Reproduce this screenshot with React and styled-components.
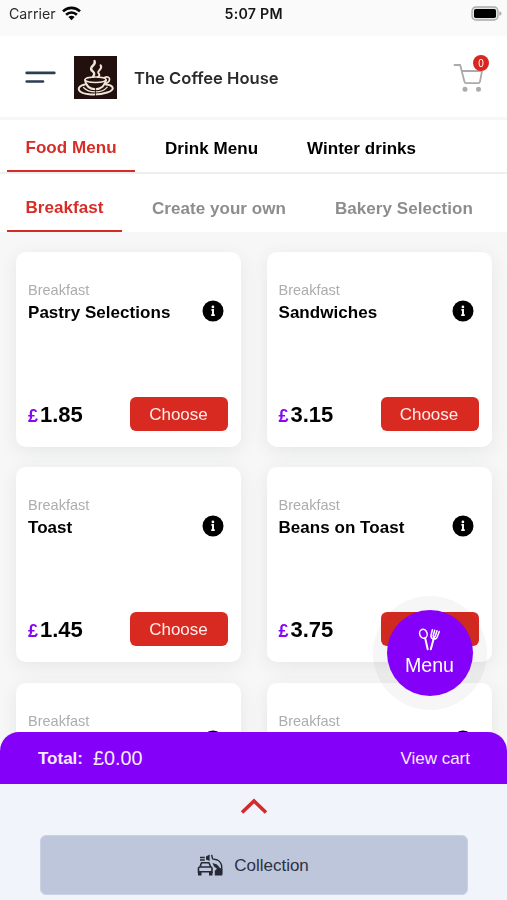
import React from "react";
import styled, { createGlobalStyle } from "styled-components";

const Global = createGlobalStyle`
  * { box-sizing: border-box; }
  body { margin: 0; background: #f7f7f7; }
  button { font: inherit; border: 0; padding: 0; margin: 0; }
`;

const Screen = styled.div`
  position: relative;
  display: flex;
  flex-direction: column;
  width: 507px;
  height: 900px;
  overflow: hidden;
  background: #f7f7f7;
  color: #000;
  font-family: "Liberation Sans", Arial, sans-serif;
  font-size: 17px;
  white-space: nowrap;
`;

const StatusBar = styled.div`
  display: grid;
  grid-template-columns: 215.5px auto 1fr;
  align-items: center;
  flex: none;
  height: 36px;
  padding: 0 4px 9px 9px;
  background: #fafafa;
  font-family: Inter, sans-serif;
  font-size: 14.2px;
`;

const Carrier = styled.div`
  display: flex;
  align-items: center;
  gap: 6px;
  color: #2b2b2b;
`;

const Clock = styled.div`
  font-weight: 600;
  letter-spacing: 0.25px;
  color: #161616;
`;

const Battery = styled.svg`
  justify-self: end;
  margin-right: 1px;
`;

const Header = styled.header`
  display: flex;
  align-items: center;
  flex: none;
  height: 84px;
  padding: 2px 18px 0 25px;
  background: #fff;
  border-bottom: 3px solid #f7f7f7;
`;

const Logo = styled.svg`
  margin-left: 18px;
`;

const Title = styled.h1`
  flex: 1;
  margin: 0 0 0 17px;
  font: 600 16.6px Inter, sans-serif;
  color: #2b2b2b;
`;

const CartButton = styled.div`
  position: relative;
  width: 36px;
  height: 46px;
`;

const CartIcon = styled.svg`
  display: block;
  margin-top: 7px;
`;

const Badge = styled.span`
  position: absolute;
  top: 0;
  right: 0;
  width: 16px;
  height: 16px;
  border-radius: 50%;
  background: #d92620;
  color: #fff;
  font-size: 10px;
  line-height: 17px;
  text-align: center;
`;

const Tabs = styled.nav`
  display: flex;
  flex: none;
  height: ${(p) => (p.$sub ? 58 : 54)}px;
  padding-left: 7px;
  background: #fff;
  border-bottom: ${(p) => (p.$sub ? "0" : "2px solid #efefef")};
`;

const Tab = styled.div`
  height: ${(p) => (p.$sub ? 58 : 52)}px;
  width: ${(p) => p.$width}px;
  flex: none;
  padding-left: 18.5px;
  margin-right: ${(p) => p.$gap || 0}px;
  padding-top: ${(p) => (p.$sub ? 24 : 18) + (p.$active ? 0 : 1)}px;
  line-height: 20px;
  font-weight: 700;
  letter-spacing: 0.05px;
  color: ${(p) => (p.$active ? "#d82c27" : p.$sub ? "#8d8d8d" : "#000")};
  border-bottom: ${(p) => (p.$active ? "2px solid #d62b26" : "0")};
`;

const Grid = styled.main`
  display: grid;
  grid-template-columns: 225px 225px;
  grid-auto-rows: 195px;
  column-gap: 25.5px;
  row-gap: 20.4px;
  flex: none;
  height: 520px;
  padding: 20px 15px 0 16px;
  overflow: hidden;
`;

const Card = styled.article`
  display: flex;
  flex-direction: column;
  padding: 28px 13px 16px 12px;
  border-radius: 10px;
  background: #fff;
  box-shadow: 0 4px 18px rgba(60, 70, 70, 0.09);
`;

const Category = styled.div`
  color: #adadad;
  font-size: 14.5px;
  line-height: 20px;
`;

const NameRow = styled.div`
  display: flex;
  justify-content: space-between;
  align-items: center;
  height: 23px;
  padding-right: 4.5px;
`;

const Name = styled.h2`
  margin: 2px 0 0;
  font-size: 17px;
  line-height: 20px;
  letter-spacing: 0.04px;
`;

const InfoMark = styled.svg`
  margin: -1px 0 1px auto;
`;

const BuyRow = styled.div`
  display: flex;
  align-items: center;
  justify-content: space-between;
  margin-top: auto;
`;

const Price = styled.div`
  padding-top: 2px;
  font-size: 22px;
  font-weight: 700;
`;

const Currency = styled.span`
  margin-right: 2px;
  color: #8606f5;
  font-size: 18px;
`;

const Choose = styled.button`
  width: 98px;
  height: 34px;
  padding: 2px 1px 0 0;
  border-radius: 6px;
  background: #d82a21;
  color: #ffeceb;
`;

const MenuHalo = styled.div`
  position: absolute;
  left: 373px;
  top: 596px;
  width: 114px;
  height: 114px;
  padding: 14px;

  &::before {
    content: "";
    position: absolute;
    inset: 0;
    border-radius: 50%;
    background: #f6f6f6;
    mix-blend-mode: multiply;
  }
`;

const MenuButton = styled.button`
  position: relative;
  display: flex;
  flex-direction: column;
  align-items: center;
  width: 86px;
  height: 86px;
  padding: 18px 1px 0 0;
  border-radius: 50%;
  background: #8400f8;
  color: #fff;
  font-size: 19.6px;
  line-height: 22px;
`;

const MenuIcon = styled.svg`
  margin-bottom: 3px;
`;

const Sheet = styled.footer`
  position: relative;
  flex: none;
  height: 168px;
  margin-top: -20px;
`;

const TotalBar = styled.div`
  display: flex;
  align-items: center;
  height: 52px;
  padding: 1px 37px 0 38px;
  border-radius: 19px 19px 0 0;
  background: #8400f8;
  color: #f8eaff;
`;

const TotalLabel = styled.span`
  font-weight: 700;
  font-size: 17px;
  padding-top: 1px;
`;

const TotalValue = styled.span`
  flex: 1;
  margin-left: 10px;
  font-size: 19.8px;
`;

const Delivery = styled.div`
  display: flex;
  flex-direction: column;
  align-items: center;
  height: 116px;
  padding-top: 13px;
  background: #f2f4fb;
`;

const Collection = styled.button`
  display: flex;
  align-items: center;
  justify-content: center;
  gap: 11px;
  width: 428px;
  height: 60px;
  margin-top: 20px;
  padding: 1px 1px 0 0;
  border: 1px solid #ccd2e3;
  border-radius: 6px;
  background: #bec6dc;
  color: #2d3140;
`;

const products = [
  { id: 1, name: "Pastry Selections", price: "1.85" },
  { id: 2, name: "Sandwiches", price: "3.15" },
  { id: 3, name: "Toast", price: "1.45" },
  { id: 4, name: "Beans on Toast", price: "3.75" },
  { id: 5 },
  { id: 6 },
];

function InfoIcon() {
  return (
    <InfoMark width="22" height="22" viewBox="0 0 22 22">
      <circle cx="11" cy="11" r="10.5" fill="#000" />
      <circle cx="10.9" cy="6.9" r="1.35" fill="#fff" />
      <path d="M9.4 9.9H11V15M9.2 15.1H12.8" stroke="#fff" strokeWidth="1.9" fill="none" />
    </InfoMark>
  );
}

function Product({ name, price }) {
  return (
    <Card>
      <Category>Breakfast</Category>
      <NameRow>
        {name && <Name>{name}</Name>}
        <InfoIcon />
      </NameRow>
      {price && (
        <BuyRow>
          <Price>
            <Currency>£</Currency>
            {price}
          </Price>
          <Choose>Choose</Choose>
        </BuyRow>
      )}
    </Card>
  );
}

export default function App() {
  return (
    <Screen>
      <Global />
      <StatusBar>
        <Carrier>
          Carrier
          <svg width="19" height="15" viewBox="0 0 19 15" fill="none" stroke="#050505" strokeWidth="2.6">
            <path d="M1 5.4C5.8.7 13.2.7 18 5.4M4.1 8.7C7.2 5.8 11.8 5.8 14.9 8.7" />
            <path d="M6.4 11.1C8.2 9.4 10.8 9.4 12.6 11.1L9.5 14.3Z" fill="#050505" stroke="none" />
          </svg>
        </Carrier>
        <Clock>5:07 PM</Clock>
        <Battery width="31" height="15" viewBox="0 0 31 15">
          <rect x="1" y="1" width="26" height="13" rx="3.8" fill="#e5e5e5" stroke="#aaa" strokeWidth="1.3" />
          <rect x="3" y="3" width="22" height="9" rx="1.8" fill="#000" />
          <path d="M28.4 5.2C31.2 6 31.2 9 28.4 9.8Z" fill="#aaa" />
        </Battery>
      </StatusBar>

      <Header>
        <svg width="31" height="13" viewBox="0 0 31 13" stroke="#2c3d50" strokeWidth="2.7" strokeLinecap="round">
          <path d="M1.7 1.9H29.3M1.7 10.5H18" />
        </svg>
        <Logo width="43" height="43" viewBox="0 0 43 43" fill="none" stroke="#f1e5d5" strokeLinecap="round">
          <rect width="43" height="43" fill="#21100d" stroke="none" />
          <path d="M20.5 5C22.5 9 16 10 17.2 13.5C18 16 22.2 16 19.2 20.5" strokeWidth="2.4" />
          <path d="M26.5 9.2C29.5 13 23.5 14 24.2 16.5C25 18.5 26.5 18.5 24.2 21" strokeWidth="2" />
          <ellipse cx="21.5" cy="23.8" rx="10.5" ry="2.7" strokeWidth="1.5" />
          <path d="M11 24C12 30 16 33.2 21.4 33.2C27 33.2 31 29.5 32 24" strokeWidth="2" />
          <path d="M30.5 21.4C37 19 37.5 26 30.5 27.8" strokeWidth="1.6" />
          <path d="M10.8 28.5C1.5 30.5 2.3 37.5 17 38.4C29 39 40.8 35.3 38.5 31.2C37.7 29.7 35.3 28.8 32 28.5" strokeWidth="2" />
          <path d="M9.5 31.5C15 37.5 28 37.5 33.2 31.2" strokeWidth="1.2" />
          <path d="M21.5 30V40" stroke="#21100d" strokeWidth=".8" />
        </Logo>
        <Title>The Coffee House</Title>
        <CartButton>
          <CartIcon width="31" height="32" viewBox="0 0 31 32" fill="none" stroke="#ababab" strokeWidth="1.8" strokeLinejoin="round" strokeLinecap="round">
            <path d="M1.5 3H7.2L11.4 19.5Q11.7 21.2 13.3 21.2H25Q26.7 21.2 27 19.5L29 9H8.8" />
            <circle cx="12" cy="27.3" r="1.6" fill="#ababab" />
            <circle cx="25.5" cy="27.3" r="1.6" fill="#ababab" />
          </CartIcon>
          <Badge>0</Badge>
        </CartButton>
      </Header>

      <Tabs>
        <Tab $active $width={128} $gap={11.5}>Food Menu</Tab>
        <Tab $width={128} $gap={14}>Drink Menu</Tab>
        <Tab $width={150}>Winter drinks</Tab>
      </Tabs>
      <Tabs $sub>
        <Tab $sub $active $width={115} $gap={11.5}>Breakfast</Tab>
        <Tab $sub $width={171} $gap={12}>Create your own</Tab>
        <Tab $sub $width={175}>Bakery Selection</Tab>
      </Tabs>

      <Grid>
        {products.map((p) => (
          <Product key={p.id} name={p.name} price={p.price} />
        ))}
      </Grid>

      <MenuHalo>
        <MenuButton>
          <MenuIcon width="23" height="23" viewBox="0 0 23 23" fill="none" stroke="#fff" strokeWidth="1.5" strokeLinecap="round" strokeLinejoin="round">
            <ellipse cx="5.4" cy="5.8" rx="3.7" ry="4.5" transform="rotate(-18 5.4 5.8)" />
            <path d="M7.2 10.3L9.7 21.2M15.6 11L12.8 21.2" strokeWidth="2" />
            <path d="M14.4 1.8L13 7.2Q12.6 10.3 15.2 11Q18.3 11.4 19.3 8.7L21.3 3.5M16.7 2.2L15.2 7.5L15.8 10L17.3 8L19 2.8" />
          </MenuIcon>
          Menu
        </MenuButton>
      </MenuHalo>

      <Sheet>
        <TotalBar>
          <TotalLabel>Total:</TotalLabel>
          <TotalValue>£0.00</TotalValue>
          <span>View cart</span>
        </TotalBar>
        <Delivery>
          <svg width="28" height="18" viewBox="0 0 28 18" fill="none" stroke="#d32b2b" strokeWidth="3.6">
            <path d="M2 15.5L14 4L26 15.5" />
          </svg>
          <Collection>
            <svg width="26" height="23" viewBox="0 0 26 23" fill="none" stroke="#252936" strokeWidth="1.6" strokeLinejoin="round">
              <path d="M3 13L4.5 8.8H12L13.7 13M1.5 19V14Q1.5 13 3 13H13.7Q15 13 15 14.5V19M1.5 17.8H15" />
              <path d="M1 18H4.5V21.5H1ZM12 18H15.5V21.5H12ZM3 2.8H7.8V4.3H3ZM3 5.2H7.8V6.7H3Z" fill="#252936" stroke="none" />
              <path d="M9 2.4L12.6.5V7L9 5.4Z" fill="#252936" stroke="none" />
              <path d="M14.6.8L15.6 4.9L20.5 6Q24.7 8.3 24.7 13V20" strokeWidth="1.4" />
              <path d="M15.5 9L20 10.5L23 14L25.3 15V21.5H17.8V16.8L20 14.7L17 12.5Z" fill="#252936" stroke="none" />
            </svg>
            Collection
          </Collection>
        </Delivery>
      </Sheet>
    </Screen>
  );
}
